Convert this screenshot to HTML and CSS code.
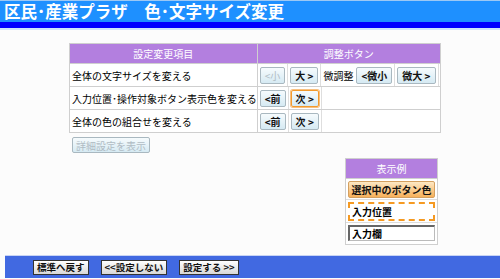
FILE: index.html
```html
<!DOCTYPE html>
<html lang="ja">
<head>
<meta charset="utf-8">
<link rel="stylesheet" href="styles.css">
</head>
<body>
<div class="header">
  <div class="title">区民･産業プラザ　色･文字サイズ変更</div>
  <div class="band"></div>
</div>
<div class="main">
  <table class="settings">
    <tr>
      <th class="col-item">設定変更項目</th>
      <th>調整ボタン</th>
    </tr>
    <tr>
      <td class="item">全体の文字サイズを変える</td>
      <td class="ctrl">
        <table class="inner"><tr>
          <td><button class="btn" disabled>&lt;小</button></td>
          <td><button class="btn">大 &gt;</button></td>
          <td class="plain">微調整</td>
          <td><button class="btn">&lt;微小</button></td>
          <td><button class="btn">微大 &gt;</button></td>
        </tr></table>
      </td>
    </tr>
    <tr>
      <td class="item">入力位置･操作対象ボタン表示色を変える</td>
      <td class="ctrl">
        <table class="inner"><tr>
          <td><button class="btn">&lt;前</button></td>
          <td><button class="btn focus">次 &gt;</button></td>
        </tr></table>
      </td>
    </tr>
    <tr>
      <td class="item">全体の色の組合せを変える</td>
      <td class="ctrl">
        <table class="inner"><tr>
          <td><button class="btn">&lt;前</button></td>
          <td><button class="btn">次 &gt;</button></td>
        </tr></table>
      </td>
    </tr>
  </table>
  <div class="detail-row"><button class="btn wide" disabled>詳細設定を表示</button></div>
  <div class="example">
    <div class="ex-head">表示例</div>
    <div class="ex-cell"><span class="ex-btn">選択中のボタン色</span></div>
    <div class="ex-cell"><div class="ex-focus">入力位置</div></div>
    <div class="ex-cell"><div class="ex-input">入力欄</div></div>
  </div>
</div>
<div class="footer">
  <button class="fbtn">標準へ戻す</button>
  <button class="fbtn">&lt;&lt;設定しない</button>
  <button class="fbtn">設定する &gt;&gt;</button>
</div>
</body>
</html>
```

FILE: styles.css
```css
html, body {
  margin: 0;
  padding: 0;
  background: #fcfcfc;
  font-family: "Noto Sans CJK JP", "Noto Sans", sans-serif;
  width: 500px;
  height: 279px;
  overflow: hidden;
}
.header {
  border-top: 1px solid #9cc8f4;
}
.title {
  background: #1e90ff;
  color: #fff;
  font-weight: bold;
  font-size: 16.5px;
  line-height: 21px;
  height: 21px;
  padding-left: 4px;
  white-space: nowrap;
}
.band {
  background: #0000ff;
  height: 6px;
  border-bottom: 2px solid #cfe6fb;
}
.main {
  padding-top: 13px;
  height: 212px;
}
.settings {
  margin-left: 69px;
  border-collapse: collapse;
  width: 372px;
  font-size: 10px;
}
.settings th {
  background: #b37fdf;
  color: #fff;
  font-weight: normal;
  height: 19px;
  padding: 0;
  border: 1px solid #cfcfcf;
  font-size: 10px;
}
.settings .col-item {
  width: 186px;
}
.settings td {
  border: 1px solid #cfcfcf;
  height: 22px;
  padding: 0;
  background: #fff;
}
.settings td.item {
  padding-left: 2px;
  white-space: nowrap;
}
.inner {
  border-collapse: collapse;
}
.inner td {
  border: 1px solid #dedede;
  border-top: 0;
  border-bottom: 0;
  height: 22px;
  padding: 0 2px;
  white-space: nowrap;
}
.inner td:first-child {
  border-left: 0;
}
.inner td.plain {
  border: 0;
  font-size: 10px;
  padding: 0 1px 0 2px;
}
.inner td.plain + td {
  border-left: 0;
}
.btn {
  font-family: inherit;
  font-size: 10px;
  font-weight: bold;
  height: 17px;
  padding: 0 4px;
  line-height: 15px;
  border: 1px solid #a9b8c0;
  border-radius: 2px;
  background: linear-gradient(#f6fbfd, #d6eaf3);
  color: #111;
  white-space: nowrap;
  vertical-align: middle;
}
.btn:disabled {
  color: #b0bcc4;
  font-weight: normal;
}
.btn.focus {
  border-color: #f39a2c;
  box-shadow: 0 0 0 1px #f8c080;
}
.detail-row {
  display: flex;
  margin-top: 4px;
  margin-left: 72px;
}
.btn.wide {
  height: 16px;
  padding: 0 3px;
}
.example {
  margin-left: 345px;
  margin-top: 5px;
  width: 91px;
  border: 1px solid #cfcfcf;
  background: #fff;
  font-size: 10px;
}
.ex-head {
  background: #b37fdf;
  color: #fff;
  height: 19px;
  line-height: 19px;
  text-align: center;
  border-bottom: 1px solid #cfcfcf;
}
.ex-cell {
  padding: 2px 2px 1px;
  border-bottom: 1px solid #dedede;
}
.ex-cell:last-child {
  border-bottom: 0;
  padding-bottom: 3px;
}
.ex-btn {
  display: block;
  height: 15px;
  line-height: 15px;
  text-align: center;
  font-weight: bold;
  border: 1px solid #d4a060;
  border-radius: 2px;
  background: linear-gradient(#fde8c4, #f7b05a);
  color: #111;
  white-space: nowrap;
}
.ex-focus {
  border: 2px dashed #f59a23;
  height: 15px;
  line-height: 15px;
  padding-left: 2px;
  font-weight: bold;
}
.ex-input {
  border: 1px solid #bbb;
  border-left: 2px solid #666;
  border-top: 2px solid #666;
  height: 13px;
  line-height: 13px;
  padding-left: 2px;
  font-weight: bold;
}
.footer {
  margin-left: 5px;
  background: #4169e1;
  height: 22px;
  display: flex;
  align-items: center;
  gap: 12px;
  padding-left: 28px;
  border-top: 1px solid #c8d4f4;
}
.fbtn {
  font-family: inherit;
  font-size: 9.5px;
  font-weight: bold;
  height: 15px;
  line-height: 13px;
  padding: 0 3px;
  border: 1px solid #333;
  border-radius: 0;
  background: linear-gradient(#ffffff, #d8d8d8);
  color: #111;
  white-space: nowrap;
}
```
